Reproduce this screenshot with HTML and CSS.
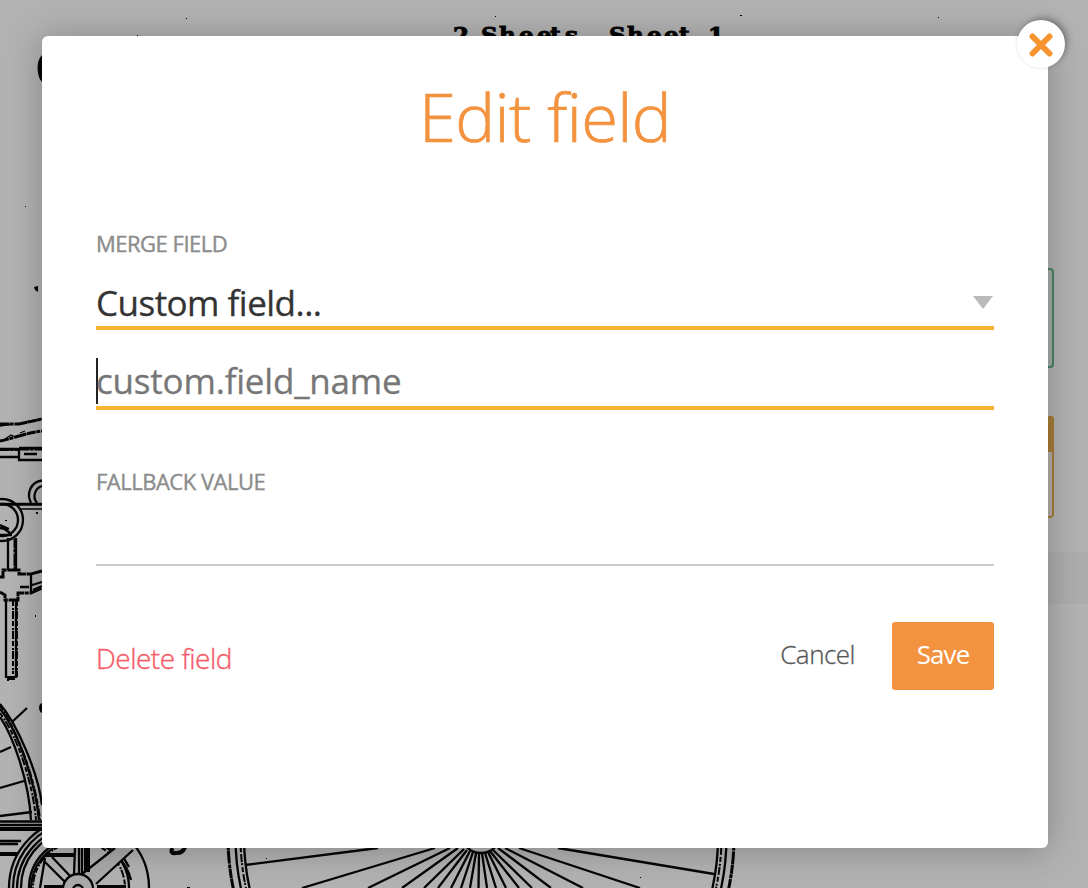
FILE: index.html
```html
<!DOCTYPE html>
<html lang="en">
<head>
<meta charset="utf-8">
<title>Edit field</title>
<link rel="stylesheet" href="styles.css">
</head>
<body>
<svg class="document" viewBox="0 0 1088 888" aria-hidden="true">
  <!-- typed sheet heading and stray ink -->
  <g class="typed">
    <text x="453" y="43">2</text><text x="481 499 519 537 550 565" y="43">Sheets</text><text x="609 627 647 664 679" y="43">Sheet</text><text x="708" y="43">1</text>
  </g>
  <path class="ink-fill" d="M44 54C35 57 36 80 44 83ZM34 287l4-1v6l-3-2ZM186 18h1v1h-1ZM137 35h1v1h-1ZM495 16h1v1h-1ZM740 15h2v1h-2ZM938 17h1v1h-1ZM25 206h1v1h-1ZM36 512h2v2h-2ZM35 615h1v2h-1ZM42 703c-4 1-4 8 0 10ZM7 680h2v1h-2ZM266 858h1v1h-1ZM640 877h1v1h-1ZM187 887h3v1h-3ZM5 520h2v1h-2Z"/>
  <!-- handlebar and frame -->
  <g class="ink">
    <path class="rough" d="M0 424L19 424L42 419M0 441C14 438 26 433 42 431"/>
    <path class="thin" d="M0 426l13-2M25 422l17-3M5 439l6-4 4 2M20 433l5-2"/>
    <path d="M0 449H18M0 457H18M19 448H42M19 448V460H42M24 454H37"/>
    <path class="rough" d="M0 449.500H18M20 449H42"/>
    <path d="M42 480.500C31 482 26 493 31 503M42 486C35 488 32 497 37 503"/>
    <path class="thin" d="M0 503.500H42M0 505H42M20 509H42"/>
    <circle cx="2" cy="520" r="21"/><circle cx="2" cy="520" r="16"/>
    <path d="M0 528c6 0 8 4 10 5M0 525l9 4M0 535h12"/>
    <path d="M8 538V570M16 538V570"/><path class="rough" d="M15 539V569"/>
    <path class="rough" d="M0 577H3V570H19V574H31L42 571M0 592L5 595V600H18V593H31L42 588"/>
    <path d="M31 573V592M20 587h9M32 585l10-3M33 590l9-4"/>
    <path d="M6 601V678M16 601V678"/><path class="thin rough-thin" d="M13 601V674M17 601V677"/><path class="heavy" d="M7 678H15"/>
  </g>
  <!-- left wheel -->
  <g class="ink">
    <path d="M0 704C17 724 38 772 42 805M0 709C17 729 35 780 39 820M0 717C13 736 29 781 31 820"/>
    <path class="rough-thin" d="M0 713C17 735 33 783 36 820M0 706C17 730 36 780 40 820"/>
    <path d="M12 722L27 708M0 752L11 747M0 788L24 781M0 816L32 812"/>
    <path class="heavy" d="M0 829H42M0 854H18"/>
    <path d="M0 821.500H42M0 825H42M0 841H21M0 844H18"/>
  </g>
  <!-- small wheel with crank -->
  <g class="ink">
    <circle cx="79" cy="888" r="70"/>
    <path d="M13 888A66 66 0 0 1 56 826M17 888A62 62 0 0 1 65 828M21 888A58 58 0 0 1 66 831"/>
    <circle cx="79" cy="888" r="50"/><circle class="rough-thin" cx="79" cy="888" r="46"/>
    <path d="M31 888A48 48 0 0 1 68 842M95 843A51 51 0 0 1 131 880M106 843A54 54 0 0 1 129 867"/>
    <path class="crank" d="M115 848L133 850L96 884L82 874Z"/>
    <path d="M45 862L65 882M52 857L71 877M45 858L40 888M75 848L74 875M79 848V874M82 848V875M115 848L82 874M133 850L96 884"/>
    <path class="frame-post" d="M87 848V872"/><path class="heavy" d="M45 855H74M44 887H63M97 887H126"/>
    <circle class="crank" cx="78" cy="889" r="15"/><circle cx="78" cy="889" r="15"/><circle cx="78" cy="890" r="5"/>
    <path class="heavy" d="M173 848c-3 3-1 6 2 5h2c5 0 7-3 8-6"/>
  </g>
  <!-- front wheel -->
  <g class="ink">
    <circle class="rough" cx="481" cy="837" r="253"/><circle cx="481" cy="837" r="245.500"/><circle cx="481" cy="837" r="237"/><circle class="rough-thin" cx="481" cy="837" r="240.500"/>
    <circle cx="481" cy="833" r="20"/>
    <path d="M245 865L378 848M302 888L435 848M368 888L450 848M402 888L458 848M424 888L464 849M438 888L467 850M451 888L470 851M461 888L473 852M470 888L476 853M478.500 888L479 853M487 888L482 853M496 888L485 853M506 888L488 852M519 888L490 851M532 888L493 850M551 888L498 848M583 888L505 848M640 888L519 848M714 874L558 848"/>
  </g>
  <!-- placed form fields and page divider -->
  <rect class="placed-green" x="951" y="269" width="102" height="98" rx="3"/>
  <rect class="placed-amber" x="951" y="417" width="102" height="100" rx="3"/>
  <path class="placed-amber-head" d="M950 416H1051a3 3 0 0 1 3 3V452H950Z"/>
  <path class="divider" d="M1000 552H1088V604H1000Z"/>
</svg>

<main class="modal">
  <button class="close" type="button" aria-label="Close">
    <svg class="close-icon" viewBox="0 0 24 24"><path d="M3.500 3.500L20.500 20.500M20.500 3.500L3.500 20.500"/></svg>
  </button>
  <h1 class="title">Edit field</h1>
  <div class="label">MERGE FIELD</div>
  <div class="control select">
    <span class="select-value">Custom field...</span>
    <svg class="arrow" viewBox="0 0 20 13"><path d="M0 0H20L10 13Z"/></svg>
  </div>
  <div class="control custom"><span class="caret"></span><span class="placeholder">custom.field_name</span></div>
  <div class="label fallback-label">FALLBACK VALUE</div>
  <div class="control fallback"></div>
  <footer class="actions">
    <a class="delete">Delete field</a>
    <a class="cancel">Cancel</a>
    <button class="save" type="button">Save</button>
  </footer>
</main>
</body>
</html>
```
FILE: styles.css
```css
* { box-sizing: border-box; }
body {
  margin: 0;
  height: 888px;
  overflow: hidden;
  position: relative;
  padding: 36px 40px 40px 42px;
  background: #b2b2b2;
  font-family: "Open Sans", "Noto Sans", sans-serif;
}
.document { position: absolute; inset: 0; width: 1088px; height: 888px; }
.typed { font: bold 23px "DejaVu Serif", serif; fill: #050505; stroke: #050505; stroke-width: 1; }
.ink { fill: none; stroke: #050505; stroke-width: 2.3; }
.ink-fill { fill: #050505; }
.crank { fill: #aaa; stroke: none; }
.thin { stroke-width: 1.3; }
.heavy { stroke-width: 4; }
.rough { stroke-width: 3; stroke-dasharray: 9 .6 4 .8 13 .5; }
.rough-thin { stroke-width: 2; stroke-dasharray: 5 2 2 1 8 2; }
.frame-post { stroke-width: 6; }
.placed-green { fill: #a3aca7; stroke: #4a8260; stroke-width: 2; }
.placed-amber { fill: #b2b0ad; stroke: #a87d36; stroke-width: 2; }
.placed-amber-head { fill: #a87d36; }
.divider { fill: #adadad; }

.modal {
  position: relative;
  height: 812px;
  padding: 34px 54px 0;
  border-radius: 6px;
  background: #fff;
  box-shadow: 0 2px 34px rgba(0, 0, 0, .26);
}
.close {
  position: absolute;
  top: -16px;
  right: -17px;
  width: 48px;
  height: 48px;
  display: grid;
  place-items: center;
  padding: 0;
  border: 0;
  border-radius: 50%;
  background: #fff;
  box-shadow: 3px -3px 7px -1px rgba(0, 0, 0, .35), 0 0 3px rgba(0, 0, 0, .08);
}
.close-icon { width: 24px; height: 24px; margin-top: 2px; fill: none; stroke: #f7942f; stroke-width: 6; stroke-linecap: round; }
.title {
  margin: 0 0 66px;
  font-size: 67px;
  line-height: 92px;
  font-weight: 300;
  letter-spacing: -.7px;
  text-align: center;
  color: #f3923f;
  -webkit-text-stroke: .7px #f3923f;
}
.label {
  height: 30px;
  font-size: 22px;
  line-height: 30px;
  letter-spacing: -.5px;
  color: #8c8c8c;
  -webkit-text-stroke: .4px #8c8c8c;
}
.control { display: flex; height: 54px; border-bottom: 4px solid #f8b035; white-space: nowrap; }
.select { margin-top: 18px; font-size: 35px; line-height: 54px; letter-spacing: -.52px; color: #333; -webkit-text-stroke: .3px #333; }
.select-value { flex: 1; }
.arrow { width: 20px; height: 13px; margin: 20px 1px 0 0; fill: #bababa; }
.custom { margin-top: 26px; font-size: 35px; line-height: 49px; letter-spacing: -.2px; color: #777; -webkit-text-stroke: .3px #777; }
.caret { width: 2px; height: 46px; margin: 2px -2px 0 0; background: #222; }
.fallback-label { margin-top: 56px; }
.fallback { margin-top: 16px; border-bottom: 2px solid #c9cccb; }
.actions { display: flex; align-items: center; height: 68px; margin-top: 56px; font-weight: 300; font-size: 26px; letter-spacing: -.5px; }
.delete { flex: 1; padding-top: 3px; font-size: 28px; color: #f55d6b; -webkit-text-stroke: .4px #f55d6b; }
.cancel { margin-right: 37px; color: #555; padding-bottom: 4px; -webkit-text-stroke: .3px #555; }
.save {
  width: 102px;
  height: 68px;
  padding: 0 0 4px;
  border: 0;
  border-radius: 3px;
  background: #f3923f;
  color: #fff;
  font: 400 26px "Open Sans", sans-serif;
  letter-spacing: -.9px;
}
```
